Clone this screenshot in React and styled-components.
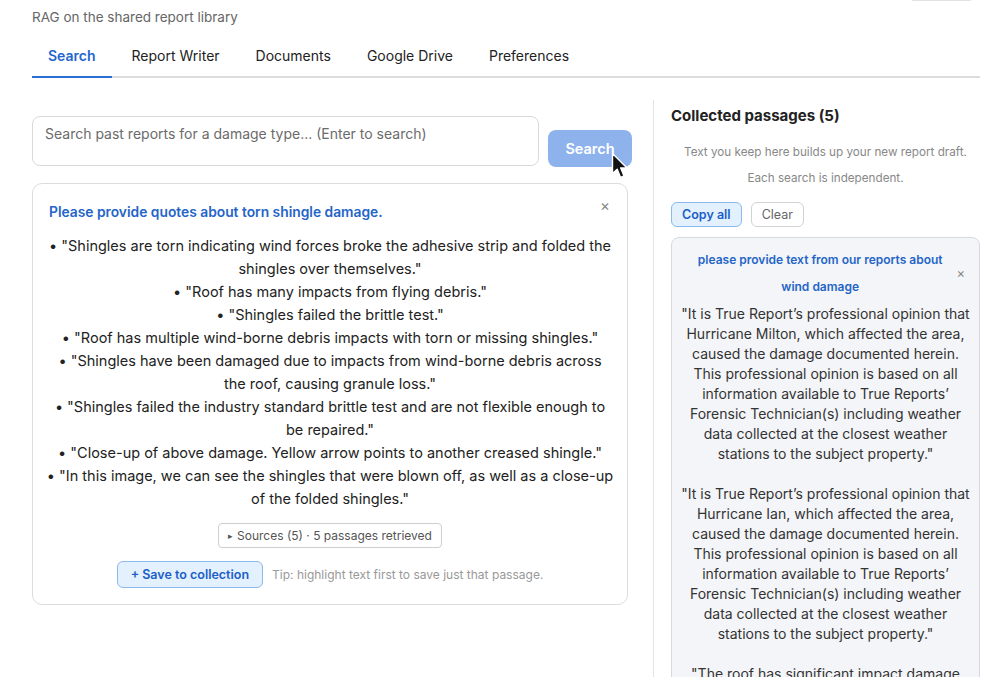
import React from 'react';
import styled, { createGlobalStyle } from 'styled-components';

const quotes = [
  '"Shingles are torn indicating wind forces broke the adhesive strip and folded the shingles over themselves."',
  '"Roof has many impacts from flying debris."',
  '"Shingles failed the brittle test."',
  '"Roof has multiple wind-borne debris impacts with torn or missing shingles."',
  '"Shingles have been damaged due to impacts from wind-borne debris across the\u00a0roof, causing granule loss."',
  '"Shingles failed the industry standard brittle test and are not flexible enough to be repaired."',
  '"Close-up of above damage. Yellow arrow points to another creased shingle."',
  '"In this image, we can see the shingles that were blown off, as well as a close-up of the folded shingles."',
];

const collectedText = [
  '"It is True Report\u2019s professional opinion that Hurricane Milton, which affected the area, caused the damage documented herein. This professional opinion is based on all information available to True Reports\u2019 Forensic Technician(s) including weather data collected at the closest weather stations to the subject property."',
  '"It is True Report\u2019s professional opinion that Hurricane Ian, which affected the area, caused the damage documented herein. This professional opinion is based on all information available to True Reports\u2019 Forensic Technician(s) including weather data collected at the closest weather stations to the subject property."',
  '"The roof has significant impact damage from wind-borne debris throughout the slopes."',
].join('\n\n');

const tabs = ['Search', 'Report Writer', 'Documents', 'Google Drive', 'Preferences'];

const PointerCursor = () => (
  <CursorIcon width="18" height="28" viewBox="0 0 18 28">
    <path
      d="M1.5 1.5 L1.5 21.5 L6.2 17.2 L9.6 25.4 L13 23.9 L9.7 15.9 L16 15.9 Z"
      fill="#111"
      stroke="#fff"
      strokeWidth="1.4"
      strokeLinejoin="round"
    />
  </CursorIcon>
);

const App = () => (
  <Page>
    <GlobalStyle />
    <Header>
      <TopRow>
        <AccountBox />
      </TopRow>
      <Subtitle>RAG on the shared report library</Subtitle>
    </Header>
    <TabBar>
      {tabs.map((tab, i) => (
        <Tab key={tab} active={i === 0}>{tab}</Tab>
      ))}
    </TabBar>
    <Main>
      <LeftColumn>
        <SearchRow>
          <QueryInput placeholder="Search past reports for a damage type... (Enter to search)" />
          <SearchButtonWrap>
            <SearchButton>Search</SearchButton>
            <PointerCursor />
          </SearchButtonWrap>
        </SearchRow>
        <ResultCard>
          <CloseButton>×</CloseButton>
          <ResultTitle>Please provide quotes about torn shingle damage.</ResultTitle>
          <QuoteList>
            {quotes.map((q) => (
              <Quote key={q}>• {q}</Quote>
            ))}
          </QuoteList>
          <SourcesButton>
            <Caret>▸</Caret>Sources (5) · 5 passages retrieved
          </SourcesButton>
          <ActionRow>
            <PrimaryButton>+ Save to collection</PrimaryButton>
            <Tip>Tip: highlight text first to save just that passage.</Tip>
          </ActionRow>
        </ResultCard>
      </LeftColumn>
      <RightColumn>
        <PanelTitle>Collected passages (5)</PanelTitle>
        <Notes>
          <Note>Text you keep here builds up your new report draft.</Note>
          <Note>Each search is independent.</Note>
        </Notes>
        <ButtonRow>
          <PrimaryButton small>Copy all</PrimaryButton>
          <GhostButton>Clear</GhostButton>
        </ButtonRow>
        <CollectionCard>
          <CollectionHeader>
            <CollectionTitle>please provide text from our reports about wind damage</CollectionTitle>
            <SmallClose>×</SmallClose>
          </CollectionHeader>
          <CollectionText>{collectedText}</CollectionText>
        </CollectionCard>
      </RightColumn>
    </Main>
  </Page>
);

const GlobalStyle = createGlobalStyle`
  html, body {
    margin: 0;
    padding: 0;
    background: #fff;
    overflow: hidden;
  }
  body {
    font-family: Inter, "Noto Sans", "Liberation Sans", sans-serif;
    color: #222;
  }
  * {
    box-sizing: border-box;
  }
`;

const Page = styled.div`
  width: 1000px;
  height: 677px;
  padding: 0 20px 0 32px;
  overflow: hidden;
`;

const Header = styled.div`
  margin-top: -28px;
`;

const TopRow = styled.div`
  display: flex;
  justify-content: flex-end;
  height: 29px;
  padding-right: 5px;
`;

const AccountBox = styled.div`
  width: 67px;
  height: 29px;
  border: 1px solid #e2e2e2;
  border-radius: 6px;
  background: #fff;
`;

const Subtitle = styled.div`
  margin-top: 7px;
  font-size: 13.5px;
  line-height: 18px;
  color: #666;
`;

const TabBar = styled.div`
  display: flex;
  gap: 4px;
  margin-top: 10px;
  border-bottom: 2px solid #dcdcdc;
`;

const Tab = styled.div`
  padding: 10px 16px;
  margin-bottom: -2px;
  font-size: 14px;
  line-height: 20px;
  color: ${(p) => (p.active ? '#1f66cf' : '#222')};
  font-weight: ${(p) => (p.active ? 600 : 400)};
  border-bottom: 2px solid ${(p) => (p.active ? '#2b6fd6' : 'transparent')};
`;

const Main = styled.div`
  display: grid;
  grid-template-columns: 596px 1fr;
  column-gap: 25px;
  margin-top: 22px;
  height: 600px;
`;

const LeftColumn = styled.div`
  padding-top: 16px;
`;

const SearchRow = styled.div`
  display: flex;
  align-items: flex-end;
  gap: 9px;
`;

const QueryInput = styled.textarea`
  flex-shrink: 0;
  width: 507px;
  height: 50px;
  resize: none;
  padding: 7px 12px;
  border: 1px solid #d9d9d9;
  border-radius: 8px;
  font: 14px/20px Inter, sans-serif;
  color: #222;
  outline: none;

  &::placeholder {
    color: #6b6b6b;
  }
`;

const SearchButtonWrap = styled.div`
  position: relative;
  flex-shrink: 0;
`;

const SearchButton = styled.button`
  width: 84px;
  height: 37px;
  border: none;
  border-radius: 8px;
  background: #8eb3ec;
  color: #fff;
  font: 600 14.5px Inter, sans-serif;
  margin-bottom: -1px;
`;

const CursorIcon = styled.svg`
  position: absolute;
  left: 63px;
  top: 22px;
`;

const ResultCard = styled.div`
  position: relative;
  margin-top: 17px;
  border: 1px solid #dcdcdc;
  border-radius: 10px;
  padding: 18px 12px 16px;
  text-align: center;
`;

const CloseButton = styled.span`
  position: absolute;
  right: 17px;
  top: 12px;
  font-size: 15px;
  color: #888;
`;

const ResultTitle = styled.div`
  text-align: left;
  padding-left: 4px;
  font-size: 13.8px;
  line-height: 20px;
  font-weight: 600;
  color: #2565c7;
`;

const QuoteList = styled.div`
  margin-top: 12px;
`;

const Quote = styled.div`
  font-size: 14.5px;
  line-height: 23px;
  color: #222;
`;

const SourcesButton = styled.div`
  display: inline-flex;
  align-items: center;
  margin-top: 13px;
  height: 25px;
  padding: 0 9px;
  border: 1px solid #cfcfcf;
  border-radius: 4px;
  font-size: 12px;
  color: #555;
`;

const Caret = styled.span`
  font-size: 9px;
  margin-right: 4px;
  color: #555;
`;

const ActionRow = styled.div`
  display: flex;
  justify-content: center;
  align-items: center;
  gap: 9px;
  margin-top: 13px;
`;

const PrimaryButton = styled.button`
  height: ${(p) => (p.small ? '25px' : '27px')};
  padding: 0 ${(p) => (p.small ? '10px' : '13px')};
  border: 1px solid #8cb9ee;
  border-radius: 6px;
  background: #e3f0fd;
  color: #1b5fc8;
  font: 600 12.5px Inter, sans-serif;
`;

const GhostButton = styled.button`
  height: 25px;
  padding: 0 10px;
  border: 1px solid #d2d2d2;
  border-radius: 6px;
  background: #fff;
  color: #666;
  font: 12.5px Inter, sans-serif;
`;

const Tip = styled.span`
  font-size: 12px;
  color: #999;
`;

const RightColumn = styled.div`
  border-left: 1px solid #e3e3e3;
  padding: 6px 0 0 17px;
`;

const PanelTitle = styled.div`
  font-size: 15px;
  line-height: 20px;
  font-weight: 700;
  color: #222;
`;

const Notes = styled.div`
  margin-top: 13px;
  text-align: center;
`;

const Note = styled.p`
  margin: 0;
  font-size: 11.7px;
  line-height: 26px;
  color: #888;
`;

const ButtonRow = styled.div`
  display: flex;
  gap: 9px;
  margin-top: 11px;
`;

const CollectionCard = styled.div`
  margin-top: 10px;
  padding: 8px 6px 0;
  background: #f3f5f8;
  border: 1px solid #d6dadf;
  border-radius: 8px;
  height: 460px;
`;

const CollectionHeader = styled.div`
  display: flex;
  align-items: center;
`;

const CollectionTitle = styled.div`
  flex: 1;
  padding: 0 12px 0 18px;
  text-align: center;
  font-size: 12px;
  line-height: 27px;
  font-weight: 600;
  color: #2565c7;
`;

const SmallClose = styled.span`
  font-size: 13px;
  color: #888;
  margin-right: 8px;
`;

const CollectionText = styled.div`
  margin-top: 4px;
  white-space: pre-wrap;
  text-align: center;
  font-size: 14px;
  line-height: 20px;
  color: #333;
`;

export default App;
